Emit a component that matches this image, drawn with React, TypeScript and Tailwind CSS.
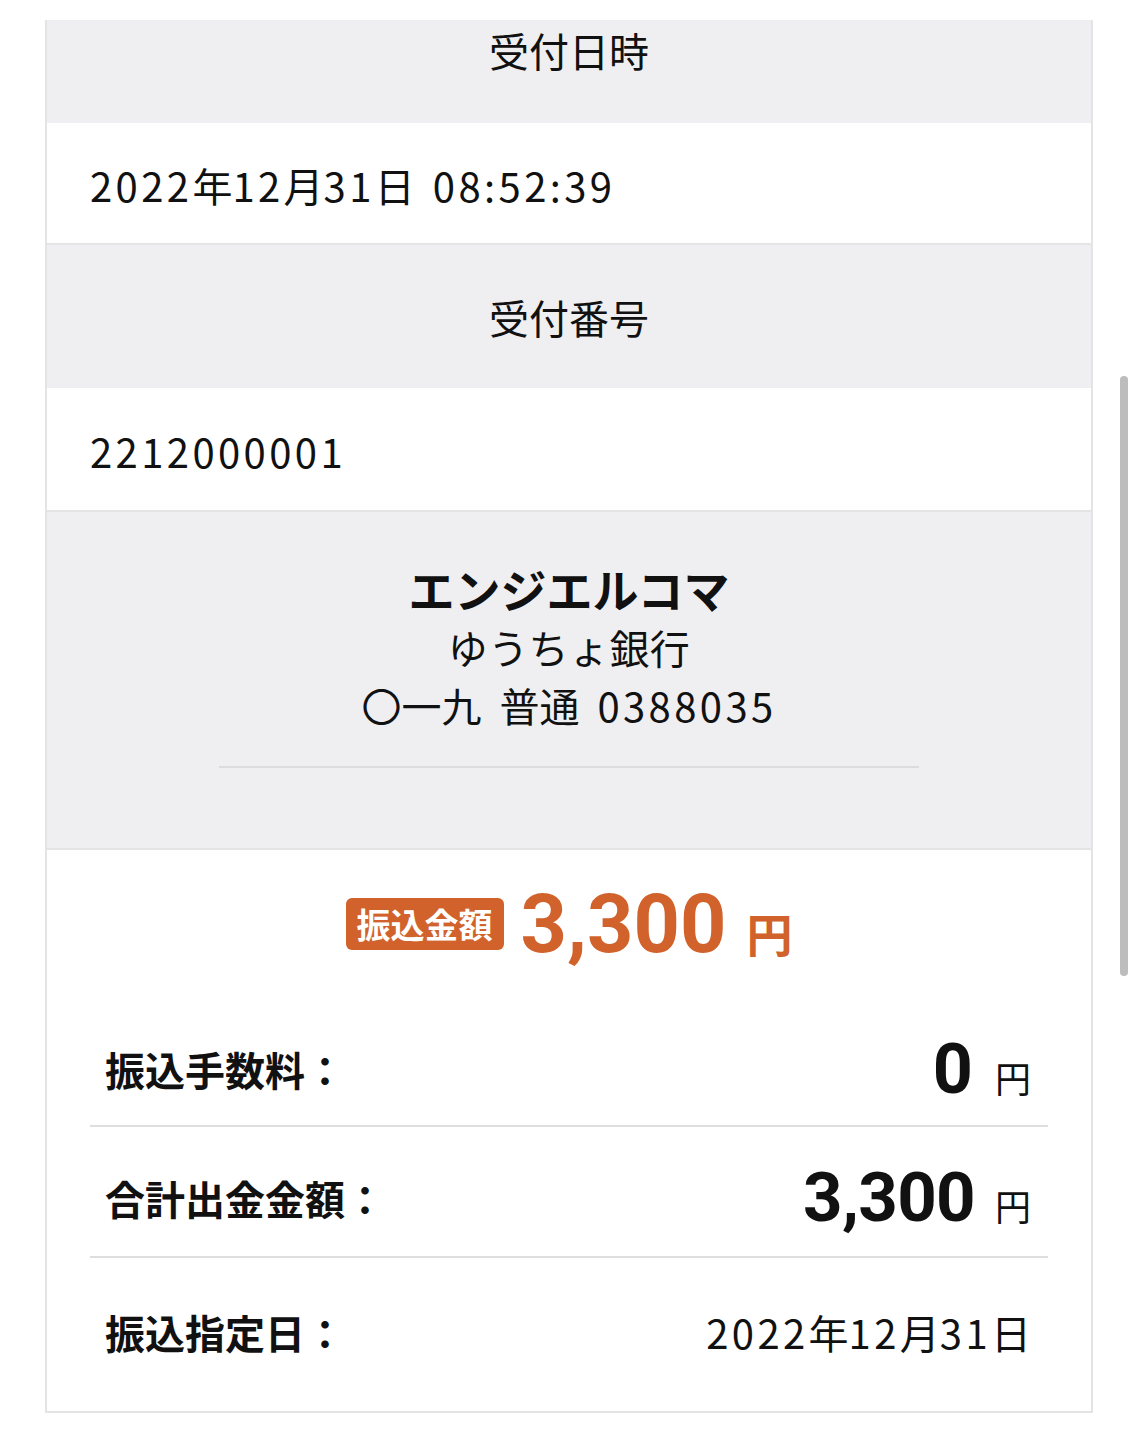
import React from "react";

const jp = { fontFamily: '"Noto Sans CJK JP", "Noto Sans", sans-serif' };
const num = { fontFamily: 'Roboto, "Noto Sans CJK JP", sans-serif' };

function Wide({ text }: { text: string }) {
  const parts = text.split(/([0-9:]+| )/).filter((p) => p.length > 0);
  return (
    <>
      {parts.map((p, i) =>
        p === " " ? (
          <span key={i} className="inline-block w-[18px]">{" "}</span>
        ) : /^[0-9:]+$/.test(p) ? (
          <span key={i} className="tracking-[0.085em]">
            {p}
          </span>
        ) : (
          <span key={i}>{p}</span>
        )
      )}
    </>
  );
}

export default function App() {
  return (
    <div className="relative min-h-[1440px] w-[1138px] bg-white text-[#111111]" style={jp}>
      <div className="pt-[20px] px-[45px]">
        <div className="border-x-2 border-b-2 border-[#e4e4e7]">
          {/* 受付日時 */}
          <div className="h-[103px] bg-[#efeff1] pt-[6px] text-center text-[40px] leading-[1.2]">受付日時</div>
          <div className="h-[122px] flex items-center pt-[4px] pl-[43px] bg-white text-[40px] border-b-2 border-[#e4e4e7]">
            <span className="whitespace-pre">
              <Wide text="2022年12月31日 08:52:39" />
            </span>
          </div>
          {/* 受付番号 */}
          <div className="h-[143px] flex items-center justify-center bg-[#efeff1] text-[40px]">受付番号</div>
          <div className="h-[124px] flex items-center pl-[43px] pt-[4px] bg-white text-[40px] border-b-2 border-[#e4e4e7]">
            <Wide text="2212000001" />
          </div>
          {/* 振込先 */}
          <div className="h-[338px] bg-[#efeff1] pt-[46px] flex flex-col items-center border-b-2 border-[#e4e4e7]">
            <div className="text-[46px] font-bold leading-[60px]">エンジエルコマ</div>
            <div className="text-[40px] leading-[58px] tracking-[0.01em]">ゆうちょ銀行</div>
            <div className="text-[40px] leading-[58px] whitespace-pre">
              <Wide text="〇一九 普通 0388035" />
            </div>
            <div className="mt-[32px] w-[700px] h-[2px] bg-[#dcdcdf]" />
          </div>
          {/* 金額 */}
          <div className="bg-white">
            <div className="h-[146px] flex items-center justify-center gap-[17px] pt-[2px]">
              <span className="bg-[#d1622b] text-white text-[34px] font-bold rounded-[6px] h-[52px] px-[11px] flex items-center leading-none">
                振込金額
              </span>
              <span className="flex items-baseline gap-[20px] text-[#d1622b] font-bold">
                <span className="text-[81px] leading-none" style={num}>3,300</span>
                <span className="text-[46px] leading-none">円</span>
              </span>
            </div>
            <div className="mx-[43px]">
              <div className="h-[131px] flex items-center justify-between pl-[15px] pr-[17px] pt-[16px] border-b-2 border-[#dedee1]">
                <span className="text-[40px] font-bold">振込手数料：</span>
                <span className="flex items-baseline gap-[22px]">
                  <span className="text-[70px] font-bold leading-none" style={num}>0</span>
                  <span className="text-[36px] leading-none">円</span>
                </span>
              </div>
              <div className="h-[131px] flex items-center justify-between pl-[15px] pr-[17px] pt-[12px] border-b-2 border-[#dedee1]">
                <span className="text-[40px] font-bold">合計出金金額：</span>
                <span className="flex items-baseline gap-[20px]">
                  <span className="text-[69px] font-bold leading-none tracking-[-0.01em]" style={num}>3,300</span>
                  <span className="text-[36px] leading-none">円</span>
                </span>
              </div>
              <div className="h-[153px] flex items-center justify-between pl-[15px] pr-[17px] pb-[6px]">
                <span className="text-[40px] font-bold">振込指定日：</span>
                <span className="text-[40px]">
                  <Wide text="2022年12月31日" />
                </span>
              </div>
            </div>
          </div>
        </div>
      </div>
      {/* scrollbar */}
      <div className="absolute left-[1120px] top-[376px] w-[8px] h-[600px] rounded-full bg-[#bdbdbd]" />
    </div>
  );
}
